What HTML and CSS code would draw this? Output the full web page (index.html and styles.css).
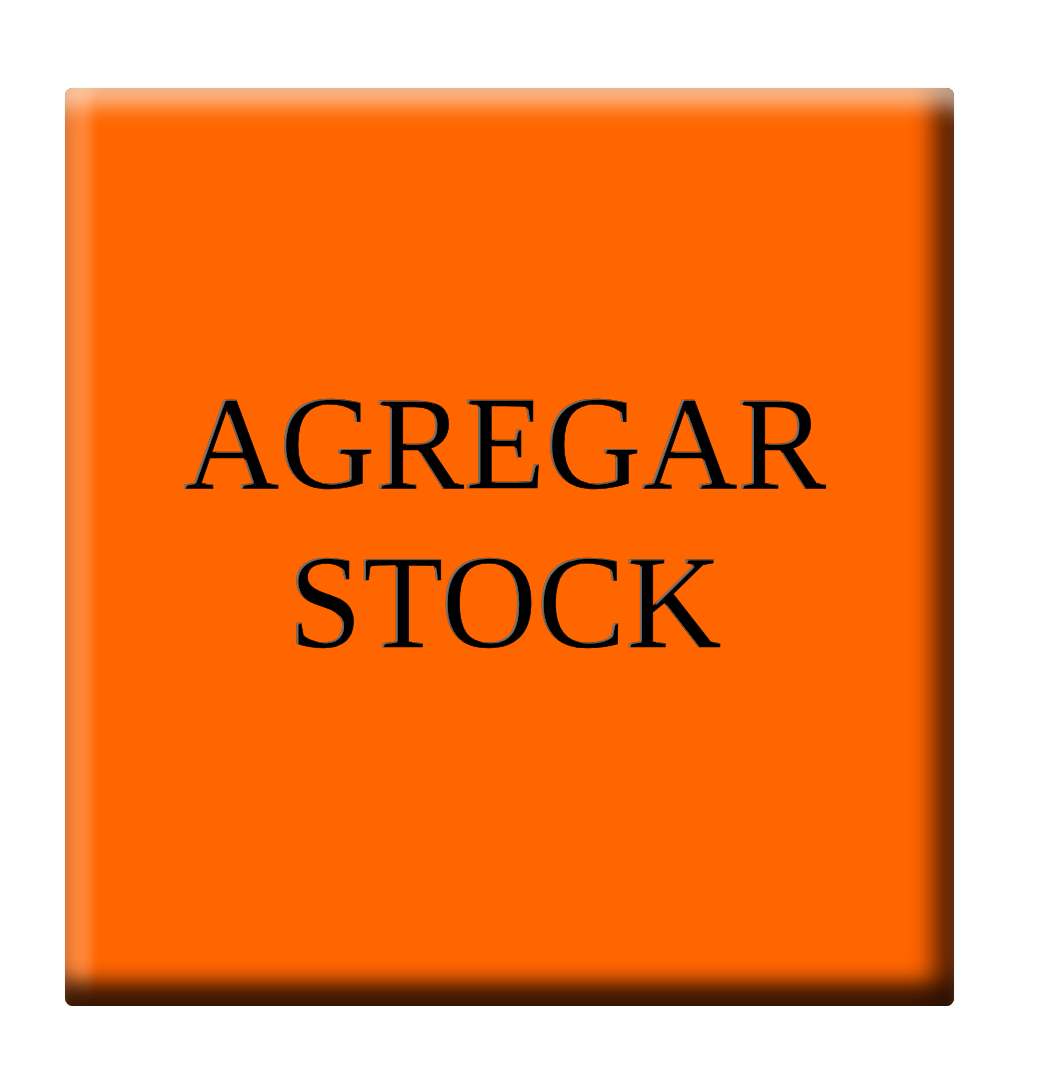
FILE: index.html
```html
<!DOCTYPE html>
<html lang="es">
<head>
<meta charset="utf-8">
<title>Agregar stock</title>
<link rel="stylesheet" href="styles.css">
</head>
<body>
<svg class="defs" width="0" height="0" aria-hidden="true">
  <defs>
    <filter id="emboss" x="-5%" y="-10%" width="110%" height="120%">
      <feGaussianBlur in="SourceAlpha" stdDeviation="1" result="blur"/>
      <feOffset in="blur" dx="2" dy="1" result="off"/>
      <feComposite in="SourceAlpha" in2="off" operator="arithmetic" k1="0" k2="1" k3="-1.6" k4="0" result="edge"/>
      <feGaussianBlur in="edge" stdDeviation="0.6" result="edgeSoft"/>
      <feFlood flood-color="#8c8c8c" result="grey"/>
      <feComposite in="grey" in2="edgeSoft" operator="in" result="hl"/>
      <feComposite in="hl" in2="SourceAlpha" operator="in" result="hlClip"/>
      <feMerge>
        <feMergeNode in="SourceGraphic"/>
        <feMergeNode in="hlClip"/>
      </feMerge>
    </filter>
  </defs>
</svg>
<div class="page">
  <button class="tile" type="button">
    <span class="label">AGREGAR<br>STOCK</span>
  </button>
</div>
</body>
</html>
```
FILE: styles.css
```css
html, body {
  margin: 0;
  padding: 0;
  background: #ffffff;
}

.defs {
  position: absolute;
  width: 0;
  height: 0;
}

.page {
  padding: 88px 0 0 65px;
}

.tile {
  display: flex;
  align-items: center;
  justify-content: center;
  box-sizing: border-box;
  width: 889px;
  height: 918px;
  margin: 0;
  padding: 0 10px 48px 0;
  border: none;
  border-radius: 8px;
  background: #ff6600;
  cursor: pointer;
  box-shadow:
    inset 0 30px 20px -12px rgba(255, 240, 222, 0.62),
    inset 0 -32px 20px -8px rgba(40, 14, 0, 0.9),
    inset 30px 0 10px -4px rgba(255, 255, 255, 0.22),
    inset -30px 0 22px -8px rgba(60, 20, 0, 0.8),
    0 0 1px rgba(0, 0, 0, 0.25);
}

.label {
  font-family: "Liberation Serif", "Times New Roman", serif;
  font-size: 133px;
  line-height: 159px;
  color: #000000;
  text-align: center;
  -webkit-text-stroke: 0.6px #000000;
  filter: url(#emboss);
}
```
